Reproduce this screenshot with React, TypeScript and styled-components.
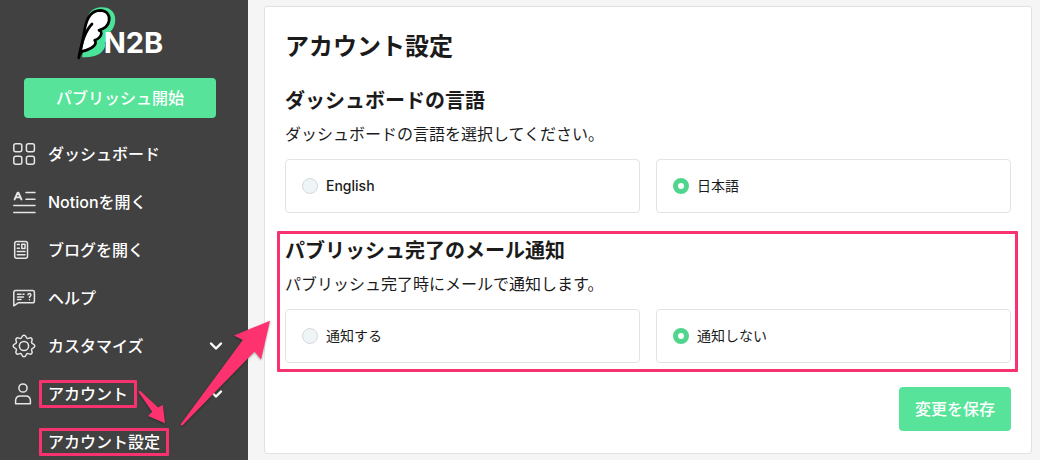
import React, { useId, useState } from "react";
import styled, { createGlobalStyle, css } from "styled-components";

const GREEN = "#57e49a";
const RADIO_GREEN = "#4fd68c";
const PINK = "#f8316f";

const GlobalStyle = createGlobalStyle`
  *, *::before, *::after { box-sizing: border-box; }
  body {
    margin: 0;
    background: #f5f5f5;
    color: #1b1b1b;
    font-family: Inter, "Noto Sans CJK JP", sans-serif;
    font-size: 16px;
    line-height: 24px;
  }
  button, input { font: inherit; margin: 0; }
`;

const Page = styled.div`
  position: relative;
  display: flex;
  min-height: 100vh;
`;

const Sidebar = styled.aside`
  flex: 0 0 248px;
  background: #414141;
  color: #fff;
`;

const LogoLink = styled.a`
  display: flex;
  justify-content: center;
  height: 78px;
  padding-right: 8px;
`;

const Button = styled.button`
  border: 0;
  border-radius: 4px;
  background: ${GREEN};
  color: #fff;
  font-weight: 500;
  cursor: pointer;
`;

const PublishButton = styled(Button)`
  display: block;
  width: 192px;
  height: 40px;
  margin: 0 auto 18px 24px;
`;

const NavList = styled.ul`
  display: flex;
  flex-direction: column;
  gap: 12px;
  margin: 0;
  padding: 0;
  list-style: none;
`;

const navRow = css`
  display: flex;
  align-items: center;
  gap: 12px;
  width: 100%;
  height: 36px;
  padding: 0 24px 0 12px;
  border: 0;
  background: none;
  color: inherit;
  font-weight: 500;
  text-align: left;
  text-decoration: none;
  cursor: pointer;
`;

const NavLink = styled.a<{ $nested?: boolean }>`
  ${navRow}
  ${(p) => p.$nested && "padding-left: 48px;"}
`;

const NavToggle = styled.button`
  ${navRow}
`;

const NavLabel = styled.span<{ $marked?: boolean }>`
  position: relative;
  ${(p) =>
    p.$marked &&
    css`
      &::after {
        content: "";
        position: absolute;
        inset: -2px -9px;
        border: 3px solid ${PINK};
        border-radius: 1px;
      }
    `}
`;

const Icon = styled.svg`
  flex: none;
  width: 24px;
  height: 24px;
  fill: none;
  stroke: #e6e6e6;
  stroke-width: 1.5;
  stroke-linecap: round;
  stroke-linejoin: round;
`;

const Chevron = styled(Icon)`
  width: 16px;
  height: 16px;
  margin-left: auto;
  stroke: #fff;
  stroke-width: 2.4;
`;

const Main = styled.main`
  flex: 1;
  min-width: 0;
  padding: 6px 8px 6px 16px;
`;

const Card = styled.form`
  display: flex;
  flex-direction: column;
  padding: 22px 20px;
  border: 1px solid #e1e1e1;
  border-radius: 3px;
  background: #fff;
`;

const Title = styled.h1`
  margin: 0 0 22px;
  font-size: 24px;
  line-height: 36px;
`;

const Section = styled.section<{ $marked?: boolean }>`
  position: relative;
  margin: 0 0 24px;
  ${(p) =>
    p.$marked &&
    css`
      &::after {
        content: "";
        position: absolute;
        inset: -6px -7px -9px -8px;
        border: 3px solid ${PINK};
        border-radius: 1px;
        pointer-events: none;
      }
    `}
`;

const SectionTitle = styled.h2`
  margin: 0 0 7px;
  font-size: 20px;
  line-height: 28px;
`;

const Description = styled.p`
  margin: 0 0 13px;
`;

const Options = styled.div`
  display: grid;
  grid-template-columns: 1fr 1fr;
  gap: 16px;
`;

const Option = styled.label`
  display: flex;
  align-items: center;
  gap: 8px;
  height: 54px;
  padding: 0 16px;
  border: 1px solid #e1e3e4;
  border-radius: 4px;
  font-size: 14px;
  cursor: pointer;
  &:lang(en) {
    font-weight: 500;
  }
`;

const Radio = styled.input`
  appearance: none;
  flex: none;
  width: 16px;
  height: 16px;
  border: 1px solid #d3d9dc;
  border-radius: 50%;
  background: #eff4f7;
  &:checked {
    border: 5px solid ${RADIO_GREEN};
    background: #fff;
  }
`;

const SaveButton = styled(Button)`
  align-self: flex-end;
  height: 44px;
  padding: 0 16px;
`;

const Arrows = styled.svg`
  position: absolute;
  top: 0;
  left: 0;
  fill: #ff3270;
  pointer-events: none;
  filter: drop-shadow(0 1px 1px rgba(0, 0, 0, 0.35));
`;

const Logo = () => (
  <svg width="120" height="70" viewBox="0 0 360 210" role="img" aria-label="N2B">
    <path
      d="M66 172C96 172 120 166 130 150C137 140 136 132 134 128C144 120 148 108 144 100C162 90 168 68 165 50C161 30 142 20 122 22C104 23 92 32 86 44Z"
      fill="#4be39a"
    />
    <path
      d="M60 162C66 132 70 110 75 84C81 52 94 32 120 31C140 31 151 46 147 63C145 76 133 86 117 91C129 94 126 112 104 121C112 130 102 146 66 154Z"
      fill="#fff"
      stroke="#000"
      strokeWidth="8"
      strokeLinejoin="round"
    />
    <path d="M56 174C62 140 72 96 96 72" fill="none" stroke="#000" strokeWidth="8" strokeLinecap="round" />
    <text x="131" y="160" fill="#fff" fontFamily="Inter, sans-serif" fontSize="87" fontWeight="700">
      N2B
    </text>
  </svg>
);

const GridIcon = () => (
  <Icon viewBox="0 0 24 24">
    <rect x="1.8" y="1.8" width="8" height="8" rx="2" />
    <rect x="14.4" y="1.8" width="8" height="8" rx="2" />
    <rect x="1.8" y="14.3" width="8" height="8" rx="2" />
    <rect x="14.4" y="14.3" width="8" height="8" rx="2" />
  </Icon>
);

const TextIcon = () => (
  <Icon viewBox="0 0 24 24">
    <path strokeWidth="1.9" d="M2.6 9.4L5.6 2.6H6.4L9.4 9.4M3.8 7.4H8.2" />
    <path d="M14 2.6H23M14 9.2H23M1.8 15.5H23M1.8 22.4H23" />
  </Icon>
);

const BlogIcon = () => (
  <Icon viewBox="0 0 24 24">
    <rect x="2.7" y="3.6" width="12.8" height="16.6" rx="2" />
    <rect x="9.8" y="6.2" width="3.2" height="4.2" />
    <path d="M5.3 6.6H7.4M5.3 10.2H7.4M5.3 13.6H13M5.3 16.8H13" />
  </Icon>
);

const HelpIcon = () => (
  <Icon viewBox="0 0 24 24">
    <path d="M1.8 19.8V6.4Q1.8 4.6 3.6 4.6H20.6Q22.4 4.6 22.4 6.4V15Q22.4 16.8 20.6 16.8H6.2Z" />
    <path d="M5.5 8.2H9M11 8.2H12M5.5 10.9H11.5M5.5 13.6H9" />
    <path d="M16 8.8Q16 7.6 17.4 7.6T18.9 9Q18.9 10 17.5 10.8V11.5M17.5 13.7V13.8" />
  </Icon>
);

const GearIcon = () => (
  <Icon viewBox="0 0 24 24">
    <circle cx="12" cy="12" r="4.6" />
    <path d="M12 1.2C14.4 1.2 13.8 4.1 15.4 4.4C17 4.9 17.9 2.7 19.6 4.4C21.3 6.1 19.1 7 19.6 8.6C19.9 10.2 22.8 9.6 22.8 12C22.8 14.4 19.9 13.8 19.6 15.4C19.1 17 21.3 17.9 19.6 19.6C17.9 21.3 17 19.1 15.4 19.6C13.8 19.9 14.4 22.8 12 22.8C9.6 22.8 10.2 19.9 8.6 19.6C7 19.1 6.1 21.3 4.4 19.6C2.7 17.9 4.9 17 4.4 15.4C4.1 13.8 1.2 14.4 1.2 12C1.2 9.6 4.1 10.2 4.4 8.6C4.9 7 2.7 6.1 4.4 4.4C6.1 2.7 7 4.9 8.6 4.4C10.2 4.1 9.6 1.2 12 1.2Z" />
  </Icon>
);

const UserIcon = () => (
  <Icon viewBox="0 0 24 24">
    <circle cx="11" cy="6" r="4.1" />
    <path d="M3.6 21.7V18.8C3.6 15.6 5.8 13.9 8.4 13.9H13.6C16.4 13.9 18.4 15.8 18.4 18.8V21.7Z" />
  </Icon>
);

const ChevronIcon = () => (
  <Chevron viewBox="0 0 16 16">
    <path d="M3 5.5L8 10.5L13 5.5" />
  </Chevron>
);

interface ChoiceOption {
  label: string;
  lang?: string;
}

interface ChoiceProps {
  name: string;
  title: string;
  description: string;
  options: ChoiceOption[];
  marked?: boolean;
}

const Choice = ({ name, title, description, options, marked }: ChoiceProps) => {
  const [selected, setSelected] = useState(options[1].label);
  const titleId = useId();
  return (
    <Section $marked={marked}>
      <SectionTitle id={titleId}>{title}</SectionTitle>
      <Description>{description}</Description>
      <Options role="radiogroup" aria-labelledby={titleId}>
        {options.map(({ label, lang }) => (
          <Option key={label} lang={lang}>
            <Radio
              type="radio"
              name={name}
              value={label}
              checked={selected === label}
              onChange={() => setSelected(label)}
            />
            {label}
          </Option>
        ))}
      </Options>
    </Section>
  );
};

export default function App() {
  return (
    <Page lang="ja">
      <GlobalStyle />
      <Sidebar>
        <LogoLink href="#">
          <Logo />
        </LogoLink>
        <PublishButton type="button">パブリッシュ開始</PublishButton>
        <nav>
          <NavList>
            <li>
              <NavLink href="#dashboard"><GridIcon /><NavLabel>ダッシュボード</NavLabel></NavLink>
            </li>
            <li>
              <NavLink href="#notion"><TextIcon /><NavLabel>Notionを開く</NavLabel></NavLink>
            </li>
            <li>
              <NavLink href="#blog"><BlogIcon /><NavLabel>ブログを開く</NavLabel></NavLink>
            </li>
            <li>
              <NavLink href="#help"><HelpIcon /><NavLabel>ヘルプ</NavLabel></NavLink>
            </li>
            <li>
              <NavToggle type="button"><GearIcon /><NavLabel>カスタマイズ</NavLabel><ChevronIcon /></NavToggle>
            </li>
            <li>
              <NavToggle type="button"><UserIcon /><NavLabel $marked>アカウント</NavLabel><ChevronIcon /></NavToggle>
            </li>
            <li>
              <NavLink href="#account" $nested><NavLabel $marked>アカウント設定</NavLabel></NavLink>
            </li>
          </NavList>
        </nav>
      </Sidebar>
      <Main>
        <Card onSubmit={(e) => e.preventDefault()}>
          <Title>アカウント設定</Title>
          <Choice
            name="language"
            title="ダッシュボードの言語"
            description="ダッシュボードの言語を選択してください。"
            options={[{ label: "English", lang: "en" }, { label: "日本語" }]}
          />
          <Choice
            name="mail"
            title="パブリッシュ完了のメール通知"
            description="パブリッシュ完了時にメールで通知します。"
            options={[{ label: "通知する" }, { label: "通知しない" }]}
            marked
          />
          <SaveButton type="submit">変更を保存</SaveButton>
        </Card>
      </Main>
      <Arrows width="280" height="460" viewBox="0 0 280 460" aria-hidden="true">
        <path d="M138.3 391.8Q139 390.6 140.6 391.2L158 407.6L162.8 405L165 423.3L148 416L152.2 411.8Z" />
        <path d="M180.5 424.4L242.8 340L234 335.4L270 320.8L261 359.6L254.6 351.4L182.6 425.2Q180.6 426 180.5 424.4Z" />
      </Arrows>
    </Page>
  );
}
